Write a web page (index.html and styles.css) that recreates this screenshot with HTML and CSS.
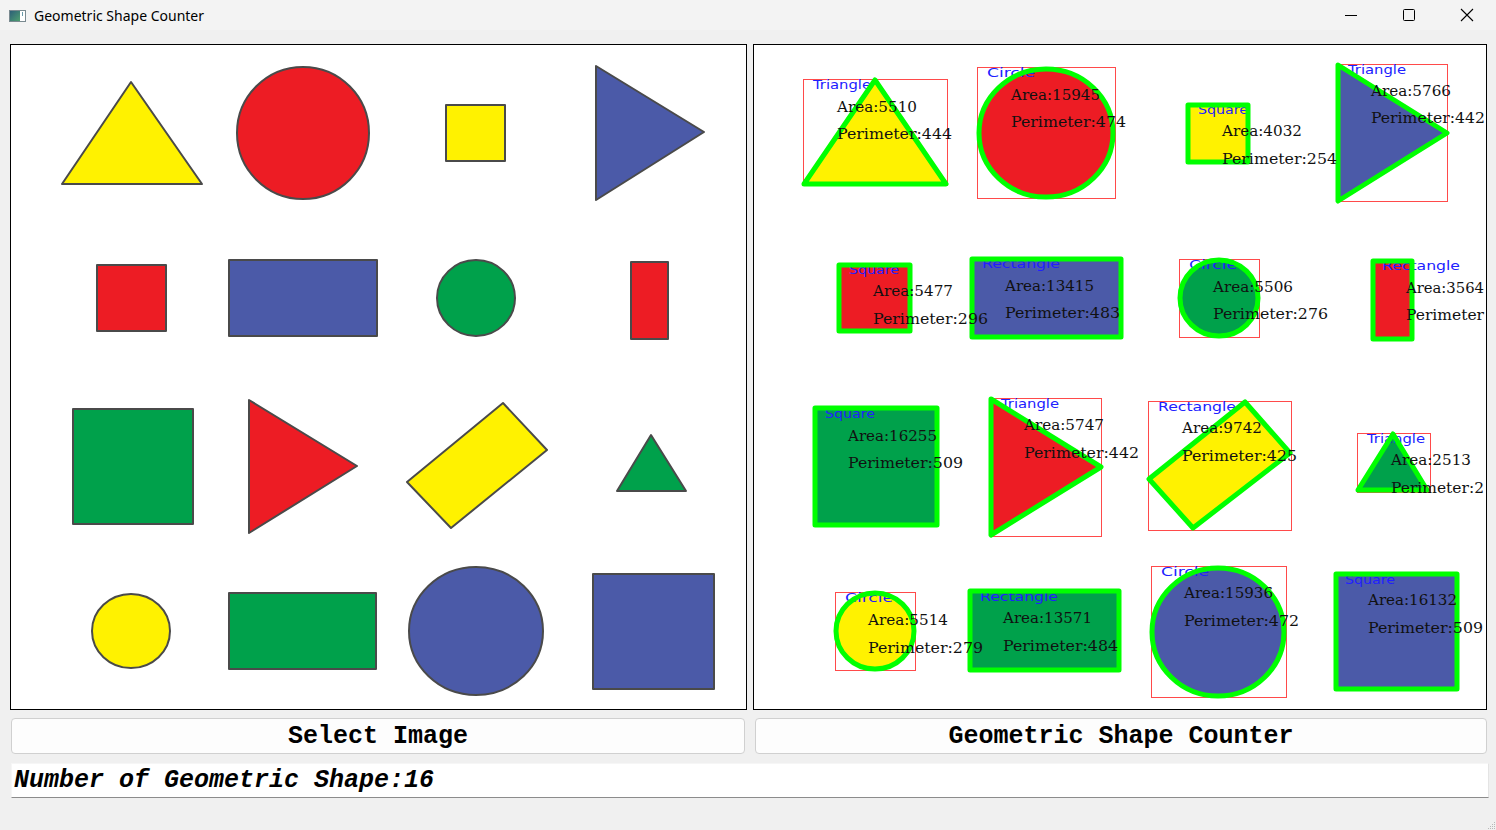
FILE: index.html
```html
<!DOCTYPE html>
<html>
<head>
<meta charset="utf-8">
<title>Geometric Shape Counter</title>
<link rel="stylesheet" href="styles.css">
</head>
<body>
<div class="window">
  <div class="titlebar">
    <svg class="app-icon" width="18" height="14" viewBox="0 0 18 14">
      <defs>
        <linearGradient id="ig" x1="0" y1="0" x2="1" y2="1">
          <stop offset="0" stop-color="#2d5f78"/>
          <stop offset="1" stop-color="#4fa070"/>
        </linearGradient>
      </defs>
      <rect x="0.5" y="1.5" width="16" height="11" fill="#fff" stroke="#7a8a90"/>
      <rect x="1" y="2" width="10" height="10" fill="url(#ig)"/>
      <line x1="13.5" y1="3" x2="13.5" y2="7" stroke="#6a9aa8"/>
    </svg>
    <span class="title">Geometric Shape Counter</span>
    <div class="controls">
      <span class="ctl"><svg width="14" height="14" viewBox="0 0 14 14"><line x1="1" y1="7.5" x2="13" y2="7.5" stroke="#000" stroke-width="1"/></svg></span>
      <span class="ctl"><svg width="14" height="14" viewBox="0 0 14 14"><rect x="1.5" y="1.5" width="11" height="11" rx="1" fill="none" stroke="#000" stroke-width="1"/></svg></span>
      <span class="ctl"><svg width="14" height="14" viewBox="0 0 14 14"><path d="M1 1 L13 13 M13 1 L1 13" stroke="#000" stroke-width="1.1"/></svg></span>
    </div>
  </div>

  <div class="content">
    <div class="panels">
      <div class="panel">
        <svg class="canvas" width="735" height="664" viewBox="11 45 735 664">
          <g class="orig">
            <polygon points="62,184 131,82 202,184" fill="#fff200"/>
            <circle cx="303" cy="133" r="66" fill="#ed1c24"/>
            <rect x="446" y="105" width="59" height="56" fill="#fff200"/>
            <polygon points="596,66 704,132 596,200" fill="#4b5aa8"/>
            <rect x="97" y="265" width="69" height="66" fill="#ed1c24"/>
            <rect x="229" y="260" width="148" height="76" fill="#4b5aa8"/>
            <ellipse cx="476" cy="298" rx="39" ry="38" fill="#00a14b"/>
            <rect x="631" y="262" width="37" height="77" fill="#ed1c24"/>
            <rect x="73" y="409" width="120" height="115" fill="#00a14b"/>
            <polygon points="249,400 357,466 249,533" fill="#ed1c24"/>
            <polygon points="407,482 503,403 547,450 451,528" fill="#fff200"/>
            <polygon points="617,491 651,435 686,491" fill="#00a14b"/>
            <ellipse cx="131" cy="631" rx="39" ry="37" fill="#fff200"/>
            <rect x="229" y="593" width="147" height="76" fill="#00a14b"/>
            <ellipse cx="476" cy="631" rx="67" ry="64" fill="#4b5aa8"/>
            <rect x="593" y="574" width="121" height="115" fill="#4b5aa8"/>
          </g>
        </svg>
      </div>
      <div class="panel">
        <svg class="canvas" width="732" height="664" viewBox="754 45 732 664">
          <g class="fill">
            <polygon points="804,184 875,80 946,184" fill="#fff200"/>
            <ellipse cx="1046" cy="133" rx="67" ry="64" fill="#ed1c24"/>
            <rect x="1188" y="105" width="60" height="57" fill="#fff200"/>
            <polygon points="1338,65 1447,133 1338,201" fill="#4b5aa8"/>
            <rect x="839" y="265" width="71" height="66" fill="#ed1c24"/>
            <rect x="972" y="259" width="149" height="78" fill="#4b5aa8"/>
            <ellipse cx="1219" cy="298" rx="39" ry="38" fill="#00a14b"/>
            <rect x="1373" y="261" width="39" height="78" fill="#ed1c24"/>
            <rect x="815" y="408" width="122" height="117" fill="#00a14b"/>
            <polygon points="991,399 1101,467 991,535" fill="#ed1c24"/>
            <polygon points="1149,479 1245,402 1290,453 1193,528" fill="#fff200"/>
            <polygon points="1358,490 1393,434 1427,490" fill="#00a14b"/>
            <ellipse cx="875" cy="631" rx="39" ry="38" fill="#fff200"/>
            <rect x="970" y="591" width="149" height="79" fill="#00a14b"/>
            <ellipse cx="1218" cy="632" rx="66" ry="64" fill="#4b5aa8"/>
            <rect x="1336" y="574" width="121" height="115" fill="#4b5aa8"/>
          </g>
          <g class="bbox">
            <rect x="803.5" y="79.5" width="144" height="106"/>
            <rect x="977.5" y="67.5" width="138" height="131"/>
            <rect x="1338.5" y="64.5" width="109" height="137"/>
            <rect x="1179.5" y="259.5" width="80" height="78"/>
            <rect x="991.5" y="398.5" width="110" height="138"/>
            <rect x="1148.5" y="401.5" width="143" height="129"/>
            <rect x="1357.5" y="433.5" width="73" height="59"/>
            <rect x="835.5" y="592.5" width="80" height="78"/>
            <rect x="1151.5" y="566.5" width="135" height="131"/>
          </g>
          <g class="lbl">
            <text x="813" y="89" textLength="58" lengthAdjust="spacingAndGlyphs">Triangle</text>
            <text x="987" y="77" textLength="48" lengthAdjust="spacingAndGlyphs">Circle</text>
            <text x="1198" y="114" textLength="50" lengthAdjust="spacingAndGlyphs">Square</text>
            <text x="1348" y="74" textLength="58" lengthAdjust="spacingAndGlyphs">Triangle</text>
            <text x="849" y="274" textLength="50" lengthAdjust="spacingAndGlyphs">Square</text>
            <text x="982" y="268" textLength="78" lengthAdjust="spacingAndGlyphs">Rectangle</text>
            <text x="1189" y="269" textLength="48" lengthAdjust="spacingAndGlyphs">Circle</text>
            <text x="1382" y="270" textLength="78" lengthAdjust="spacingAndGlyphs">Rectangle</text>
            <text x="825" y="418" textLength="50" lengthAdjust="spacingAndGlyphs">Square</text>
            <text x="1001" y="408" textLength="58" lengthAdjust="spacingAndGlyphs">Triangle</text>
            <text x="1158" y="411" textLength="78" lengthAdjust="spacingAndGlyphs">Rectangle</text>
            <text x="1367" y="443" textLength="58" lengthAdjust="spacingAndGlyphs">Triangle</text>
            <text x="845" y="602" textLength="48" lengthAdjust="spacingAndGlyphs">Circle</text>
            <text x="980" y="601" textLength="78" lengthAdjust="spacingAndGlyphs">Rectangle</text>
            <text x="1161" y="576" textLength="48" lengthAdjust="spacingAndGlyphs">Circle</text>
            <text x="1345" y="584" textLength="50" lengthAdjust="spacingAndGlyphs">Square</text>
          </g>
          <g class="contour">
            <polygon points="804,184 875,80 946,184"/>
            <ellipse cx="1046" cy="133" rx="67" ry="64"/>
            <rect x="1188" y="105" width="60" height="57"/>
            <polygon points="1338,65 1447,133 1338,201"/>
            <rect x="839" y="265" width="71" height="66"/>
            <rect x="972" y="259" width="149" height="78"/>
            <ellipse cx="1219" cy="298" rx="39" ry="38"/>
            <rect x="1373" y="261" width="39" height="78"/>
            <rect x="815" y="408" width="122" height="117"/>
            <polygon points="991,399 1101,467 991,535"/>
            <polygon points="1149,479 1245,402 1290,453 1193,528"/>
            <polygon points="1358,490 1393,434 1427,490"/>
            <ellipse cx="875" cy="631" rx="39" ry="38"/>
            <rect x="970" y="591" width="149" height="79"/>
            <ellipse cx="1218" cy="632" rx="66" ry="64"/>
            <rect x="1336" y="574" width="121" height="115"/>
          </g>
          <g class="val">
            <text x="837" y="112" textLength="80" lengthAdjust="spacingAndGlyphs">Area:5510</text>
            <text x="837" y="139" textLength="115" lengthAdjust="spacingAndGlyphs">Perimeter:444</text>
            <text x="1011" y="100" textLength="89" lengthAdjust="spacingAndGlyphs">Area:15945</text>
            <text x="1011" y="127" textLength="115" lengthAdjust="spacingAndGlyphs">Perimeter:474</text>
            <text x="1222" y="136" textLength="80" lengthAdjust="spacingAndGlyphs">Area:4032</text>
            <text x="1222" y="164" textLength="115" lengthAdjust="spacingAndGlyphs">Perimeter:254</text>
            <text x="1371" y="96" textLength="80" lengthAdjust="spacingAndGlyphs">Area:5766</text>
            <text x="1371" y="123" textLength="114" lengthAdjust="spacingAndGlyphs">Perimeter:442</text>
            <text x="873" y="296" textLength="80" lengthAdjust="spacingAndGlyphs">Area:5477</text>
            <text x="873" y="324" textLength="115" lengthAdjust="spacingAndGlyphs">Perimeter:296</text>
            <text x="1005" y="291" textLength="89" lengthAdjust="spacingAndGlyphs">Area:13415</text>
            <text x="1005" y="318" textLength="115" lengthAdjust="spacingAndGlyphs">Perimeter:483</text>
            <text x="1213" y="292" textLength="80" lengthAdjust="spacingAndGlyphs">Area:5506</text>
            <text x="1213" y="319" textLength="115" lengthAdjust="spacingAndGlyphs">Perimeter:276</text>
            <text x="1406" y="293" textLength="78" lengthAdjust="spacingAndGlyphs">Area:3564</text>
            <text x="1406" y="320" textLength="78" lengthAdjust="spacingAndGlyphs">Perimeter</text>
            <text x="848" y="441" textLength="89" lengthAdjust="spacingAndGlyphs">Area:16255</text>
            <text x="848" y="468" textLength="115" lengthAdjust="spacingAndGlyphs">Perimeter:509</text>
            <text x="1024" y="430" textLength="80" lengthAdjust="spacingAndGlyphs">Area:5747</text>
            <text x="1024" y="458" textLength="115" lengthAdjust="spacingAndGlyphs">Perimeter:442</text>
            <text x="1182" y="433" textLength="80" lengthAdjust="spacingAndGlyphs">Area:9742</text>
            <text x="1182" y="461" textLength="115" lengthAdjust="spacingAndGlyphs">Perimeter:425</text>
            <text x="1391" y="465" textLength="80" lengthAdjust="spacingAndGlyphs">Area:2513</text>
            <text x="1391" y="493" textLength="93" lengthAdjust="spacingAndGlyphs">Perimeter:2</text>
            <text x="868" y="625" textLength="80" lengthAdjust="spacingAndGlyphs">Area:5514</text>
            <text x="868" y="653" textLength="115" lengthAdjust="spacingAndGlyphs">Perimeter:279</text>
            <text x="1003" y="623" textLength="89" lengthAdjust="spacingAndGlyphs">Area:13571</text>
            <text x="1003" y="651" textLength="115" lengthAdjust="spacingAndGlyphs">Perimeter:484</text>
            <text x="1184" y="598" textLength="89" lengthAdjust="spacingAndGlyphs">Area:15936</text>
            <text x="1184" y="626" textLength="115" lengthAdjust="spacingAndGlyphs">Perimeter:472</text>
            <text x="1368" y="605" textLength="89" lengthAdjust="spacingAndGlyphs">Area:16132</text>
            <text x="1368" y="633" textLength="115" lengthAdjust="spacingAndGlyphs">Perimeter:509</text>
          </g>
        </svg>
      </div>
    </div>

    <div class="buttons">
      <button class="btn">Select Image</button>
      <button class="btn">Geometric Shape Counter</button>
    </div>

    <div class="result">Number of Geometric Shape:16</div>
  </div>

  <svg class="grip" width="9" height="9" viewBox="0 0 9 9">
    <rect x="7" y="1" width="1" height="1"/>
    <rect x="5" y="3" width="1" height="1"/><rect x="7" y="3" width="1" height="1"/>
    <rect x="3" y="5" width="1" height="1"/><rect x="5" y="5" width="1" height="1"/><rect x="7" y="5" width="1" height="1"/>
    <rect x="1" y="7" width="1" height="1"/><rect x="3" y="7" width="1" height="1"/><rect x="5" y="7" width="1" height="1"/><rect x="7" y="7" width="1" height="1"/>
  </svg>
</div>
</body>
</html>
```

FILE: styles.css
```css
html, body {
  margin: 0;
  padding: 0;
  background: #f0f0f0;
}

.window {
  position: relative;
  width: 1496px;
  height: 830px;
  background: #f0f0f0;
  overflow: hidden;
}

.titlebar {
  height: 30px;
  display: flex;
  align-items: center;
  background: #f3f3f3;
}

.app-icon {
  margin-left: 9px;
  margin-top: 1px;
}

.title {
  margin-left: 7px;
  font-family: "Noto Sans", "Open Sans", sans-serif;
  font-size: 14px;
  color: #000;
}

.controls {
  margin-left: auto;
  display: flex;
  height: 30px;
}

.ctl {
  width: 58px;
  height: 30px;
  display: flex;
  align-items: center;
  justify-content: center;
}

.ctl:nth-child(1) { padding-left: 2px; }

.content {
  padding: 14px 9px 0 10px;
}

.panels {
  display: grid;
  grid-template-columns: 737px 734px;
  column-gap: 6px;
  height: 666px;
}

.panel {
  border: 1px solid #000;
  background: #fff;
  overflow: hidden;
}

.canvas {
  display: block;
}

.orig {
  stroke: #4a4a4a;
  stroke-width: 2;
  stroke-linejoin: round;
}

.fill {
  stroke: #555;
  stroke-width: 1.5;
}

.bbox rect {
  fill: none;
  stroke: #ff4a4a;
  stroke-width: 1;
}

.contour {
  fill: none;
  stroke: #00ff00;
  stroke-width: 5;
  stroke-linejoin: round;
}

.lbl {
  font-family: "DejaVu Sans", sans-serif;
  font-size: 13px;
  fill: #2020ff;
}

.val {
  font-family: "DejaVu Serif", serif;
  font-size: 14px;
  fill: #111;
}

.buttons {
  display: grid;
  grid-template-columns: 734px 732px;
  column-gap: 10px;
  margin-top: 8px;
  padding-left: 1px;
}

.btn {
  height: 36px;
  margin: 0;
  padding: 2px 0 0 0;
  background: #fdfdfd;
  border: 1px solid #d0d0d0;
  border-radius: 4px;
  font-family: "Liberation Mono", "Courier New", monospace;
  font-weight: bold;
  font-size: 25px;
  color: #000;
  line-height: 32px;
  text-align: center;
}

.result {
  margin-top: 9px;
  margin-left: 1px;
  width: 1474px;
  height: 33px;
  background: #fff;
  border: 1px solid #f6f6f6;
  border-bottom: 1px solid #8c8c8c;
  border-right: 1px solid #e4e4e4;
  padding-left: 2px;
  font-family: "Liberation Mono", "Courier New", monospace;
  font-weight: bold;
  font-style: italic;
  font-size: 25px;
  line-height: 34px;
  color: #000;
}

.grip {
  position: absolute;
  right: 0;
  bottom: 0;
  fill: #b8b8b8;
}
```
